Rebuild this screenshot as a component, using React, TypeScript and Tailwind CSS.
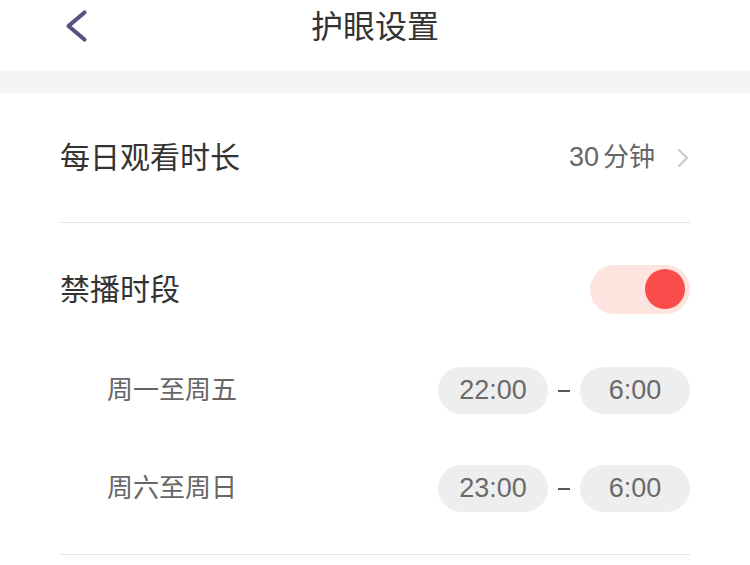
import React, { useState } from "react";

type Period = {
  label: string;
  start: string;
  end: string;
};

const periods: Period[] = [
  { label: "周一至周五", start: "22:00", end: "6:00" },
  { label: "周六至周日", start: "23:00", end: "6:00" },
];

function BackIcon() {
  return (
    <svg width="26" height="34" viewBox="0 0 26 34" fill="none">
      <path
        d="M21.5 3.5 L5.5 17 L21.5 30.5"
        stroke="#55537f"
        strokeWidth="4.2"
        strokeLinecap="round"
        strokeLinejoin="round"
      />
    </svg>
  );
}

function ChevronRight() {
  return (
    <svg width="14" height="20" viewBox="0 0 14 20" fill="none">
      <path
        d="M3 2 L11 10 L3 18"
        stroke="#c9c9c9"
        strokeWidth="2"
        strokeLinecap="round"
        strokeLinejoin="round"
      />
    </svg>
  );
}

function Toggle({ on, onChange }: { on: boolean; onChange: (next: boolean) => void }) {
  return (
    <button
      type="button"
      onClick={() => onChange(!on)}
      className={`flex h-[49px] w-[100px] items-center rounded-full px-[5px] ${
        on ? "justify-end bg-[#fde4df]" : "justify-start bg-[#eeeeee]"
      }`}
    >
      <span className={`block size-[40px] rounded-full ${on ? "bg-[#fa4c4b]" : "bg-white"}`} />
    </button>
  );
}

function TimePill({ value }: { value: string }) {
  return (
    <div className="flex h-[47px] w-[110px] items-center justify-center rounded-full bg-[#eeeeee] text-[27px] text-[#6a6a6a]">
      {value}
    </div>
  );
}

export default function App() {
  const [blocked, setBlocked] = useState(true);

  return (
    <main
      className="h-[565px] w-[750px] overflow-hidden bg-white text-[#333333]"
      style={{ fontFamily: '"Liberation Sans", "Noto Sans CJK SC", sans-serif' }}
    >
      <header className="relative flex h-[71px] items-start justify-center pt-[11px]">
        <button type="button" className="absolute left-[63px] top-[9px]">
          <BackIcon />
        </button>
        <h1 className="text-[32px] leading-none text-[#333333]">护眼设置</h1>
      </header>

      <div className="h-[22px] bg-[#f5f5f5]" />

      <section className="px-[60px]">
        <div className="flex h-[129px] items-center justify-between">
          <p className="text-[30px]">每日观看时长</p>
          <div className="flex items-center gap-[21px]">
            <span className="flex items-baseline gap-[4px] text-[26px] text-[#666666]">
              <span className="text-[27px]">30</span>
              <span>分钟</span>
            </span>
            <ChevronRight />
          </div>
        </div>

        <div className="h-px bg-[#e5e5e5]" />

        <div className="flex h-[132px] items-center justify-between">
          <p className="text-[30px]">禁播时段</p>
          <Toggle on={blocked} onChange={setBlocked} />
        </div>

        <div className="flex flex-col gap-[51px] pb-[42px] pt-[12px]">
          {periods.map((period) => (
            <div key={period.label} className="flex items-center justify-between pl-[47px]">
              <span className="text-[26px] text-[#666666]">{period.label}</span>
              <div className="flex items-center gap-[10px]">
                <TimePill value={period.start} />
                <span className="block h-[2px] w-[12px] bg-[#555555]" />
                <TimePill value={period.end} />
              </div>
            </div>
          ))}
        </div>

        <div className="h-px bg-[#e5e5e5]" />
      </section>
    </main>
  );
}
